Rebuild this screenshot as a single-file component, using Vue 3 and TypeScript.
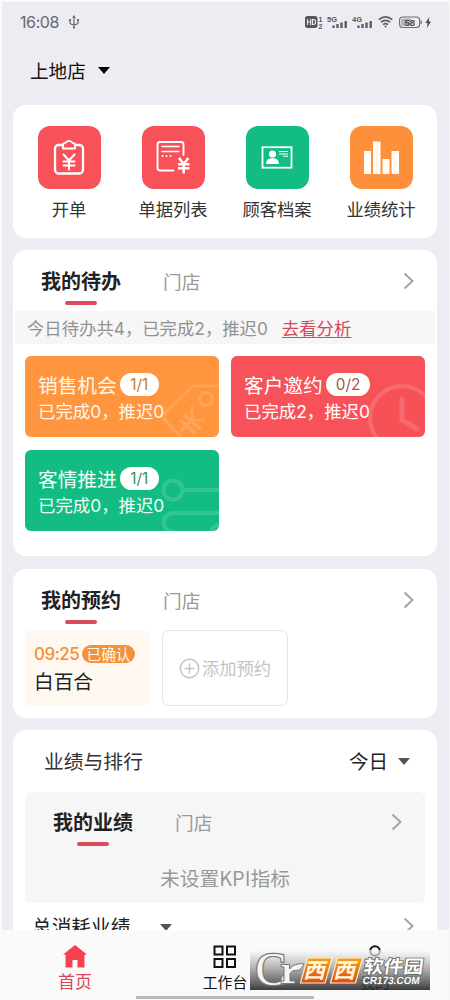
<script setup lang="ts">
interface Shortcut { key: string; label: string; color: string }
interface Todo { key: string; title: string; badge: string; done: number; late: number }

const shortcuts: Shortcut[] = [
  { key: 'order', label: '开单', color: 'red' },
  { key: 'list', label: '单据列表', color: 'red' },
  { key: 'customer', label: '顾客档案', color: 'green' },
  { key: 'stats', label: '业绩统计', color: 'orange' },
]

const todos: Todo[] = [
  { key: 'sale', title: '销售机会', badge: '1/1', done: 0, late: 0 },
  { key: 'invite', title: '客户邀约', badge: '0/2', done: 2, late: 0 },
  { key: 'care', title: '客情推进', badge: '1/1', done: 0, late: 0 },
]

const signals: string[] = ['5G', '4G']
</script>

<template>
  <div class="phone">
    <header class="status">
      <span class="time">16:08</span>
      <svg class="usb" width="12" height="14" viewBox="0 0 12 14" fill="none" stroke="#6a6a70" stroke-width="1.2">
        <path d="M6 2v11M2 5v2.500q0 2 4 2.200q4-.2 4-2.200V5" />
        <path d="M6 0l1.800 2.800H4.200zM1 4h2v2H1zM9 4h2v2H9zM5 11.500h2v2H5z" fill="#6a6a70" stroke="none" />
      </svg>
      <div class="status-right">
        <svg class="hd" width="19" height="16" viewBox="0 0 19 16">
          <rect x="0" y="2" width="12.500" height="12" rx="2.500" fill="#55555b" />
          <path d="M2.500 5v6M5.700 5v6M2.500 8h3.200M7.500 5.500v5M7 5.500h1.500q2 0 2 2.500t-2 2.500H7" fill="none" stroke="#eeedf3" stroke-width="1.100" />
          <text x="13.500" y="7.500" class="tiny">1</text>
          <text x="13.500" y="14.500" class="tiny">2</text>
        </svg>
        <svg v-for="s in signals" :key="s" class="sig" width="21" height="14" viewBox="0 0 21 14">
          <text x="0" y="6.500" class="net">{{ s }}</text>
          <path d="M6.500 10.500v2.500M10.500 9v4M14.500 7.500v5.500M18.700 6v7" fill="none" stroke="#5d5d63" stroke-width="2.400" />
        </svg>
        <svg class="wifi" width="15" height="12" viewBox="0 0 15 12" fill="none" stroke="#5d5d63" stroke-width="1.600">
          <path d="M.7 3.700Q7.500-1.800 14.300 3.700M2.900 6.200Q7.500 2.400 12.100 6.200M5 8.600Q7.500 6.600 10 8.600" />
          <circle cx="7.500" cy="10.400" r="1" fill="#5d5d63" stroke="none" />
        </svg>
        <svg class="battery" width="33" height="13" viewBox="0 0 33 13">
          <rect x=".6" y="1" width="20" height="10.500" rx="3" fill="none" stroke="#6a6a70" stroke-width="1.100" />
          <rect x="2.200" y="2.600" width="10" height="7.300" rx="1.500" fill="#b0b0b5" />
          <text x="5.500" y="9.800" class="pct">58</text>
          <path d="M22.200 4.500v3.500" stroke="#6a6a70" stroke-width="1.200" />
          <path d="M30.500 1l-4.200 6h2.300l-.8 5 4.200-6.500h-2.300z" fill="#4c4c52" />
        </svg>
      </div>
    </header>

    <div class="store">
      <span>上地店</span>
      <i class="caret"></i>
    </div>

    <section class="card shortcuts">
      <div v-for="s in shortcuts" :key="s.key" class="shortcut">
        <div class="tile" :class="s.color">
          <svg viewBox="0 0 62 62" width="62" height="62" fill="none" stroke="#fff" stroke-linecap="round" stroke-linejoin="round">
            <template v-if="s.key === 'order'">
              <path d="M25 19h-4.500a3.500 3.500 0 0 0-3.500 3.500v21a4 4 0 0 0 4 4h20a4 4 0 0 0 4-4v-21a3.500 3.500 0 0 0-3.500-3.500H37" stroke-width="2.300" />
              <path d="M25 22.500v-3.500q0-2 2.500-2q.8-2 3.500-2t3.500 2q2.500 0 2.500 2v3.500z" stroke-width="1.800" />
              <path d="M25.500 28.500l5.500 6 5.500-6M31 35v8.500M25.500 35.500h11M25.500 39.500h11" stroke-width="2" />
            </template>
            <template v-else-if="s.key === 'list'">
              <path d="M41.500 29V18.500a2.500 2.500 0 0 0-2.500-2.500H18a2.500 2.500 0 0 0-2.500 2.500v23.500a2.500 2.500 0 0 0 2.500 2.500H31.500" stroke-width="1.900" />
              <path d="M20 20.500h17M20 25.500h17" stroke-width="1.500" />
              <path d="M20.500 30h.1M24.500 30h.1M28.500 30h.1" stroke-width="1.900" />
              <path d="M37 32l4.700 6 4.700-6M36 38.300h11.500M36 42.300h11.500M41.700 38v9.500" stroke-width="2.500" stroke-linecap="butt" />
            </template>
            <template v-else-if="s.key === 'customer'">
              <rect x="16.500" y="21.200" width="29" height="20.500" stroke-width="1.800" stroke-linejoin="miter" />
              <circle cx="26.500" cy="28" r="3.600" fill="#fff" stroke="none" />
              <path d="M20 38q0-6 6.500-6t6.500 6z" fill="#fff" stroke="none" />
              <path d="M33 25.500h9M33 28h9M37 30.200h5" stroke-width="1.100" stroke-linecap="butt" />
            </template>
            <path v-else d="M14 25h7v23h-7zM23 15.500h7.500V48H23zM32.500 33h7v15h-7zM41.500 25h7.500v23h-7.500z" fill="#fffdf5" stroke="none" />
          </svg>
        </div>
        <span class="shortcut-label">{{ s.label }}</span>
      </div>
    </section>

    <section class="card todo">
      <div class="tabs">
        <span class="tab active">我的待办</span>
        <span class="tab">门店</span>
        <svg class="chev" width="12" height="18" viewBox="0 0 12 18"><path d="M1.500 1.500L9.500 9l-8 7.500" /></svg>
      </div>
      <div class="summary">
        <span>今日待办共4，已完成2，推迟0</span>
        <a class="analysis">去看分析</a>
      </div>
      <div class="todo-grid">
        <div v-for="t in todos" :key="t.key" class="todo-item" :class="t.key">
          <svg class="deco" width="58" height="54" viewBox="0 0 58 54" fill="none" stroke="#fff" stroke-width="4">
            <template v-if="t.key === 'sale'">
              <path d="M62 3H32L3 31q-2 3 0 5l20 22" stroke-width="3" />
              <circle cx="45" cy="16" r="6.500" stroke-width="3" />
              <path d="M31 23v14h13M31 37L19 49M23 32l17 14M19 37l15 13" stroke-width="3" />
            </template>
            <template v-else-if="t.key === 'invite'">
              <circle cx="35" cy="35" r="32" />
              <path d="M35 16v21l15 9" stroke-width="5" stroke-linecap="round" stroke-linejoin="round" />
            </template>
            <template v-else>
              <circle cx="12" cy="13" r="9.500" />
              <path d="M22 13h38M60 36H14q-11 0-11 10q0 9 11 9" />
              <circle cx="58" cy="56" r="8" />
            </template>
          </svg>
          <div class="todo-title">{{ t.title }}<b class="pill">{{ t.badge }}</b></div>
          <div class="todo-sub">已完成{{ t.done }}，推迟{{ t.late }}</div>
        </div>
      </div>
    </section>

    <section class="card booking">
      <div class="tabs">
        <span class="tab active">我的预约</span>
        <span class="tab">门店</span>
        <svg class="chev" width="12" height="18" viewBox="0 0 12 18"><path d="M1.500 1.500L9.500 9l-8 7.500" /></svg>
      </div>
      <div class="booking-row">
        <div class="slot">
          <div class="slot-top"><b>09:25</b><span class="ok">已确认</span></div>
          <div class="slot-name">白百合</div>
        </div>
        <div class="add">
          <svg width="21" height="21" viewBox="0 0 21 21" fill="none" stroke="#c4c4c4" stroke-width="1.500">
            <circle cx="10.500" cy="10.500" r="9.200" /><path d="M10.500 5.500v10M5.500 10.500h10" />
          </svg>
          <span>添加预约</span>
        </div>
      </div>
    </section>

    <section class="card ranking">
      <div class="rank-head">
        <span>业绩与排行</span>
        <span class="period">今日<i class="caret"></i></span>
      </div>
      <div class="panel">
        <div class="tabs">
          <span class="tab active">我的业绩</span>
          <span class="tab">门店</span>
          <svg class="chev" width="12" height="18" viewBox="0 0 12 18"><path d="M1.500 1.500L9.500 9l-8 7.500" /></svg>
        </div>
        <div class="empty">未设置KPI指标</div>
      </div>
      <div class="total">
        <span>总消耗业绩</span>
        <i class="caret"></i>
        <svg class="chev" width="12" height="18" viewBox="0 0 12 18"><path d="M1.500 1.500L9.500 9l-8 7.500" /></svg>
      </div>
    </section>

    <nav class="nav">
      <div class="nav-item home">
        <svg width="24" height="23" viewBox="0 0 24 23" fill="#f9404f"><path d="M12 0L24 9.500H21.500V22.500H14.500V15H9.500V22.500H2.500V9.500H0z" /></svg>
        <span>首页</span>
      </div>
      <div class="nav-item">
        <svg width="24" height="24" viewBox="0 0 24 24" fill="none" stroke="#111" stroke-width="2"><path d="M1.500 1.500h8v8h-8zM14 1.500h8v8h-8zM1.500 14h8v8h-8zM14 14h8v8h-8z" /></svg>
        <span class="small">工作台</span>
      </div>
      <div class="nav-item">
        <svg width="24" height="24" viewBox="0 0 24 24" fill="none" stroke="#111" stroke-width="2"><circle cx="12" cy="6" r="4.800" /></svg>
        <span class="small">我的</span>
      </div>
    </nav>
    <div class="handle"></div>

    <svg class="mark" width="180" height="40" viewBox="0 0 180 40">
      <defs>
        <linearGradient id="bar" x1="0" y1="0" x2="0" y2="1">
          <stop offset="0" stop-color="#fafafa" stop-opacity=".65" />
          <stop offset=".5" stop-color="#969696" stop-opacity=".82" />
          <stop offset="1" stop-color="#202020" stop-opacity=".86" />
        </linearGradient>
        <linearGradient id="box" x1="0" y1="0" x2="0" y2="1">
          <stop offset="0" stop-color="#f6a21b" /><stop offset="1" stop-color="#df4a12" />
        </linearGradient>
      </defs>
      <rect width="180" height="40" fill="url(#bar)" />
      <text x="5.500" y="34.500" class="big-c">C</text>
      <path d="M31 14.500h8.500v4.500q3-4 6.500-4.500q4-1.500 8-.5q-3 7-8.500 6.500q-3.500-.5-5.500 3V31h5v2.500H31V31h3V17h-3z" fill="#f4f4f4" stroke="#777" stroke-width="1" />
      <path d="M57.500 8h24.500l-7 25h-24.500zM87.500 8h25l-7 25h-25z" fill="url(#box)" stroke="#fbeccb" stroke-width="1.200" />
      <g class="xi" transform="skewX(-14)">
        <text x="60" y="28" textLength="22" lengthAdjust="spacingAndGlyphs">西</text>
        <text x="90" y="28" textLength="22" lengthAdjust="spacingAndGlyphs">西</text>
      </g>
      <g class="site" transform="skewX(-8)">
        <text x="116" y="23" class="cn" textLength="60" lengthAdjust="spacingAndGlyphs">软件园</text>
        <text x="117" y="34" class="en" textLength="57" lengthAdjust="spacingAndGlyphs">CR173.COM</text>
      </g>
    </svg>
  </div>
</template>

<style>
html, body { margin: 0; overflow: hidden; }
</style>

<style scoped>
* { box-sizing: border-box; }
.phone {
  position: relative; width: 450px; height: 1000px; overflow: hidden;
  padding: 0 12px 0 11px; background: #edecf2;
  border-left: 2px solid #fafafa; border-top: 2px solid #fafafa; border-right: 1px solid #f7f7f9;
  font-family: "Noto Sans CJK SC", sans-serif; color: #222;
}
.status { display: flex; align-items: center; height: 40px; padding: 0 5px 0 7px; }
.time { font: 16px/20px Inter, sans-serif; letter-spacing: -.4px; color: #68686e; }
.usb { margin-left: 9px; }
.status-right { display: flex; align-items: center; margin-left: auto; }
.hd { margin-right: -1px; }
.sig { margin-left: 4px; }
.tiny { font: bold 7px "Liberation Sans", sans-serif; fill: #55555b; }
.net { font: bold 7.500px "Liberation Sans", sans-serif; fill: #55555b; }
.pct { font: bold 9.500px "Liberation Sans", sans-serif; fill: #4c4c52; }
.wifi { margin-left: 5px; }
.battery { margin-left: 6px; }
.store { display: flex; align-items: center; height: 63px; padding: 0 0 6px 17px; font-size: 18.600px; line-height: 25px; color: #111; }
.store span { margin-top: -2px; }
.caret { display: inline-block; width: 0; height: 0; border: 6.500px solid transparent; border-top: 7px solid #555; border-bottom: 0; }
.store .caret { margin-left: 12px; border-top-color: #000; }
.card { width: 424px; background: #fff; border-radius: 13px; margin-bottom: 13px; overflow: hidden; }
.shortcuts { display: flex; justify-content: space-between; height: 133px; padding: 21px 4px 0; }
.shortcut { width: 104px; display: flex; flex-direction: column; align-items: center; }
.tile { width: 63px; height: 63px; border-radius: 12px; overflow: hidden; }
.red { background: #f75259; }
.green { background: #13bc83; }
.orange { background: #ff903b; }
.shortcut-label { margin-top: 7px; font-size: 17.300px; line-height: 26px; color: #333; }
.todo { height: 306px; margin-top: -1px; }
.tabs { display: flex; align-items: flex-start; height: 61px; padding: 16px 22px 0 28px; }
.tab { font-size: 18.700px; line-height: 30px; color: #9a9a9a; }
.tab.active { display: flex; flex-direction: column; align-items: center; margin-right: 42px; font-size: 20px; font-weight: 700; color: #222; }
.tab.active::after { content: ""; width: 32px; height: 4px; margin-top: 5px; border-radius: 2px; background: #dc4b5c; }
.chev { margin: 6px 0 0 auto; fill: none; stroke: #a5a5a5; stroke-width: 2; }
.summary { height: 33px; margin: 0 2px; padding: 1px 12px 0; background: #f6f6f6; color: #929292; font-family: Inter, "Noto Sans CJK SC", sans-serif; font-size: 17.350px; line-height: 33px; display: flex; }
.analysis { margin-left: 14px; color: #d44859; text-decoration: underline; text-underline-offset: 2px; text-decoration-thickness: 1px; }
.todo-grid { display: grid; grid-template-columns: 194px 194px; gap: 13px 12px; padding: 12px 12px 0; }
.todo-item { position: relative; height: 81px; border-radius: 6px; padding: 15px 0 0 13px; color: #fff8ec; overflow: hidden; }
.sale { background: #ff953e; }
.invite { background: #f75259; color: #fff; }
.care { background: #13bc83; color: #effff5; }
.deco { position: absolute; right: 0; bottom: 0; opacity: .14; }
.todo-title { position: relative; display: flex; align-items: center; height: 27px; font-size: 19.700px; }
.pill { height: 23px; min-width: 39px; padding: 0 10px; margin-left: 3px; border-radius: 12px; background: #fffffb; color: #c07b3d; font-family: Inter, sans-serif; font-size: 15.300px; line-height: 23px; font-weight: 400; text-align: center; }
.invite .pill { color: #a75359; }
.care .pill { color: #35906e; }
.todo-sub { position: relative; padding-top: 1px; font-family: Inter, "Noto Sans CJK SC", sans-serif; font-size: 17.400px; line-height: 26px; }
.booking { height: 149px; margin-bottom: 12px; }
.booking-row { display: flex; gap: 12px; padding-left: 12px; }
.slot { width: 125px; height: 76px; border-radius: 6px; background: #fff8f0; padding: 10px 0 0 9px; }
.slot-top { display: flex; align-items: center; height: 27px; color: #f0903a; font-size: 17px; }
.slot-top b { font-family: Inter, sans-serif; font-weight: 500; width: 46px; letter-spacing: -.5px; }
.ok { margin-left: 2px; width: 53px; height: 18px; border-radius: 9px; background: #f4913a; color: #fff8ec; font-size: 14.700px; line-height: 17px; text-align: center; }
.slot-name { font-size: 19.700px; line-height: 28px; color: #222; }
.add { width: 126px; height: 76px; border: 1px solid #e6e6e6; border-radius: 6px; display: flex; align-items: center; justify-content: center; gap: 2px; font-size: 17.300px; color: #c4c4c4; }
.add span { margin-top: -2px; }
.ranking { height: 250px; }
.rank-head { display: flex; justify-content: space-between; height: 62px; padding: 0 27px 0 31px; font-size: 19.800px; line-height: 61px; color: #333; }
.period { display: flex; align-items: center; height: 61px; color: #222; font-size: 19.500px; }
.period .caret { margin: 2px 0 0 10px; }
.panel { width: 400px; height: 111px; margin-left: 12px; border-radius: 6px; background: #f6f6f6; }
.panel .tabs { padding-top: 15px; }
.empty { padding-top: 10px; text-align: center; font-size: 19.800px; line-height: 30px; color: #999; }
.total { display: flex; align-items: center; height: 46px; padding: 0 22px 0 19px; font-size: 19.700px; line-height: 46px; }
.total .caret { margin: 3px 0 0 30px; }
.total .chev { margin-top: 0; }
.nav { position: absolute; left: -2px; right: -1px; bottom: 0; height: 70px; display: grid; grid-template-columns: repeat(3, 1fr); background: #fafafa; }
.nav-item { display: flex; flex-direction: column; align-items: center; padding-top: 15px; font-size: 17px; line-height: 26px; color: #111; }
.home { color: #dd4658; }
.small { font-size: 14.800px; }
.handle { position: absolute; left: 134px; bottom: 1px; width: 178px; height: 3px; background: #b9b9b9; }
.mark { position: absolute; left: 248px; bottom: 10px; overflow: visible; }
.big-c { font: 46px "Liberation Serif", serif; fill: #f4f4f4; stroke: #777; stroke-width: 2.500px; paint-order: stroke; }
.xi { font: 700 21px "Noto Sans CJK SC", sans-serif; fill: #fff8de; }
.site { fill: #fff; stroke: #666; stroke-width: 1.600px; paint-order: stroke; }
.cn { font: 700 18px "Noto Sans CJK SC", sans-serif; }
.en { font: 700 10.500px "Liberation Sans", sans-serif; }
</style>
